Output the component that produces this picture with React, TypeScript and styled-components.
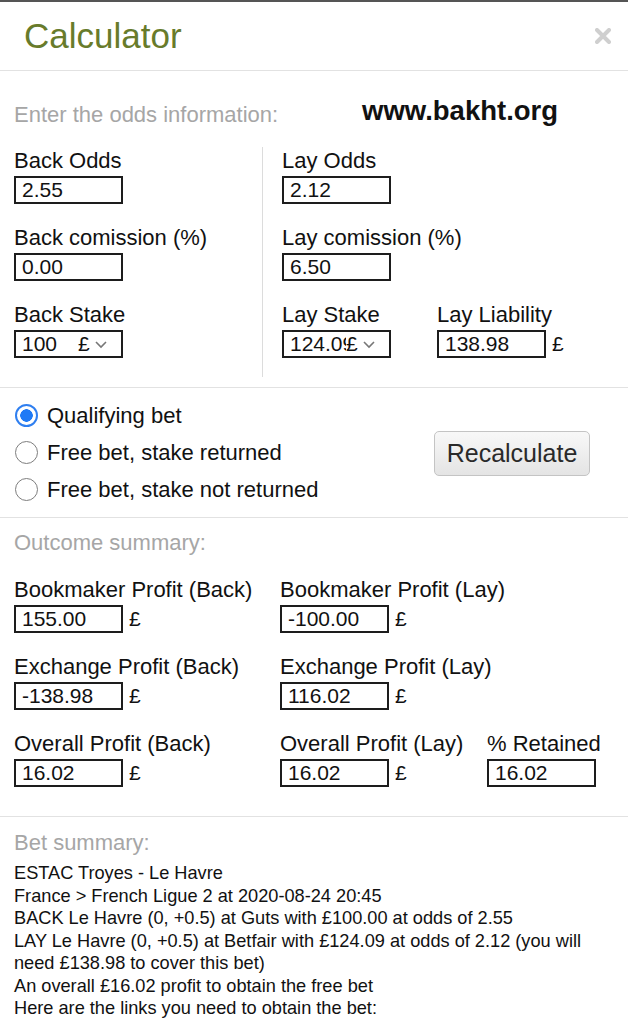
import styled, { createGlobalStyle } from 'styled-components';

const GlobalStyle = createGlobalStyle`
  html, body {
    margin: 0;
    padding: 0;
    background: #ffffff;
  }
  body {
    font-family: "Liberation Sans", Arial, sans-serif;
    color: #111;
  }
`;

export default function App() {
  return (
    <>
      <GlobalStyle />
      <Modal>
        <Header>
          <Title>Calculator</Title>
          <CloseButton aria-label="Close">
            <svg width="16" height="16" viewBox="0 0 16 16">
              <path d="M2 2 L14 14 M14 2 L2 14" stroke="#cfcfcf" strokeWidth="4" strokeLinecap="round" />
            </svg>
          </CloseButton>
        </Header>

        <OddsSection>
          <IntroRow>
            <Heading>Enter the odds information:</Heading>
            <SiteName>www.bakht.org</SiteName>
          </IntroRow>
          <Columns>
            <LeftColumn>
              <Field label="Back Odds" value="2.55" />
              <Field label="Back comission (%)" value="0.00" />
              <FieldGroup>
                <Label>Back Stake</Label>
                <SelectBox>
                  <SelectValue $width={56}>100</SelectValue>
                  <span>£</span>
                  <Chevron />
                </SelectBox>
              </FieldGroup>
            </LeftColumn>
            <RightColumn>
              <Field label="Lay Odds" value="2.12" />
              <Field label="Lay comission (%)" value="6.50" />
              <FieldRow>
                <FieldGroup>
                  <Label>Lay Stake</Label>
                  <SelectBox>
                    <SelectValue $width={56}>124.09</SelectValue>
                    <span>£</span>
                    <Chevron />
                  </SelectBox>
                </FieldGroup>
                <Field label="Lay Liability" value="138.98" currency />
              </FieldRow>
            </RightColumn>
          </Columns>
        </OddsSection>

        <BetTypeSection>
          <RadioList>
            <RadioRow>
              <Radio $checked />
              Qualifying bet
            </RadioRow>
            <RadioRow>
              <Radio />
              Free bet, stake returned
            </RadioRow>
            <RadioRow>
              <Radio />
              Free bet, stake not returned
            </RadioRow>
          </RadioList>
          <RecalcButton>Recalculate</RecalcButton>
        </BetTypeSection>

        <OutcomeSection>
          <Heading>Outcome summary:</Heading>
          <OutcomeGrid>
            <Field label="Bookmaker Profit (Back)" value="155.00" currency />
            <Field label="Bookmaker Profit (Lay)" value="-100.00" currency />
            <span />
            <Field label="Exchange Profit (Back)" value="-138.98" currency />
            <Field label="Exchange Profit (Lay)" value="116.02" currency />
            <span />
            <Field label="Overall Profit (Back)" value="16.02" currency />
            <Field label="Overall Profit (Lay)" value="16.02" currency />
            <Field label="% Retained" value="16.02" />
          </OutcomeGrid>
        </OutcomeSection>

        <SummarySection>
          <Heading>Bet summary:</Heading>
          <SummaryText>
            ESTAC Troyes - Le Havre
            <br />
            France &gt; French Ligue 2 at 2020-08-24 20:45
            <br />
            BACK Le Havre (0, +0.5) at Guts with £100.00 at odds of 2.55
            <br />
            LAY Le Havre (0, +0.5) at Betfair with £124.09 at odds of 2.12 (you will need £138.98 to cover this bet)
            <br />
            An overall £16.02 profit to obtain the free bet
            <br />
            Here are the links you need to obtain the bet:
          </SummaryText>
        </SummarySection>
      </Modal>
    </>
  );
}

function Field({ label, value, currency }: { label: string; value: string; currency?: boolean }) {
  return (
    <FieldGroup>
      <Label>{label}</Label>
      <InputLine>
        <InputBox>{value}</InputBox>
        {currency && <Currency>£</Currency>}
      </InputLine>
    </FieldGroup>
  );
}

function Chevron() {
  return (
    <ChevronIcon width="14" height="10" viewBox="0 0 14 10">
      <path d="M2 3 L7 8 L12 3" fill="none" stroke="#777" strokeWidth="1.6" />
    </ChevronIcon>
  );
}

const Modal = styled.div`
  width: 628px;
  min-height: 1024px;
  border-top: 2px solid #555;
  box-sizing: border-box;
  background: #fff;
  overflow: hidden;
`;

const Header = styled.div`
  height: 68px;
  display: flex;
  align-items: center;
  justify-content: space-between;
  padding: 0 17px 0 24px;
  border-bottom: 1px solid #e2e2e2;
`;

const Title = styled.h1`
  margin: 0;
  font-size: 35px;
  font-weight: normal;
  color: #687b2b;
  line-height: 68px;
`;

const CloseButton = styled.div`
  display: flex;
  align-items: center;
  margin-top: -1px;
`;

const Section = styled.div`
  padding: 0 14px;
  border-bottom: 1px solid #e2e2e2;
`;

const OddsSection = styled(Section)`
  padding-top: 25px;
  padding-bottom: 10px;
`;

const IntroRow = styled.div`
  display: grid;
  grid-template-columns: 348px auto;
  align-items: end;
  height: 31px;
`;

const Heading = styled.div`
  font-size: 22px;
  line-height: 24px;
  color: #a6a6a6;
`;

const SiteName = styled.div`
  font-size: 27.5px;
  font-weight: bold;
  color: #111;
  line-height: 29px;
  align-self: start;
`;

const Columns = styled.div`
  display: flex;
  margin-top: 20px;
`;

const LeftColumn = styled.div`
  width: 248px;
  display: flex;
  flex-direction: column;
  gap: 22px;
  padding-top: 2px;
`;

const RightColumn = styled.div`
  flex: 1;
  display: flex;
  flex-direction: column;
  gap: 22px;
  padding: 2px 0 19px 19px;
  border-left: 1px solid #dcdcdc;
`;

const FieldRow = styled.div`
  display: flex;
  gap: 46px;
`;

const FieldGroup = styled.div`
  display: flex;
  flex-direction: column;
  gap: 3px;
`;

const Label = styled.div`
  font-size: 22px;
  line-height: 24px;
  color: #111;
  white-space: nowrap;
`;

const InputLine = styled.div`
  display: flex;
  align-items: center;
  gap: 6px;
`;

const InputBox = styled.div`
  width: 109px;
  height: 28px;
  box-sizing: border-box;
  border: 2px solid #1d1d1d;
  padding: 0 6px;
  font-size: 21px;
  line-height: 24px;
  color: #111;
  background: #fff;
`;

const Currency = styled.span`
  font-size: 21px;
  color: #111;
`;

const SelectBox = styled.div`
  width: 109px;
  height: 28px;
  box-sizing: border-box;
  border: 2px solid #1d1d1d;
  padding: 0 4px 0 6px;
  display: flex;
  align-items: center;
  font-size: 21px;
  line-height: 24px;
  color: #111;
  overflow: hidden;
  white-space: nowrap;
`;

const SelectValue = styled.span<{ $width: number }>`
  width: ${(p) => p.$width}px;
  overflow: hidden;
  flex-shrink: 0;
`;

const ChevronIcon = styled.svg`
  margin-left: 4px;
  flex-shrink: 0;
`;

const BetTypeSection = styled(Section)`
  display: flex;
  align-items: center;
  justify-content: space-between;
  padding: 9px 38px 9px 14px;
`;

const RadioList = styled.div`
  display: flex;
  flex-direction: column;
`;

const RadioRow = styled.label`
  display: flex;
  align-items: center;
  gap: 9px;
  height: 37px;
  font-size: 22px;
  color: #111;
  white-space: nowrap;
`;

const Radio = styled.span<{ $checked?: boolean }>`
  width: 23px;
  height: 23px;
  box-sizing: border-box;
  border-radius: 50%;
  margin-left: 1px;
  flex-shrink: 0;
  border: ${(p) => (p.$checked ? '2px solid #2f7ff0' : '1.5px solid #7e7e7e')};
  background: ${(p) =>
    p.$checked ? 'radial-gradient(circle, #1f7af6 0 6px, #fff 6.5px)' : '#fff'};
`;

const RecalcButton = styled.button`
  width: 156px;
  height: 45px;
  border: 1px solid #c4c4c4;
  border-radius: 5px;
  background: linear-gradient(#f8f8f8, #e4e4e4);
  font-family: "Liberation Sans", Arial, sans-serif;
  font-size: 25px;
  color: #2a2a2a;
  padding: 0;
  margin-top: 1px;
`;

const OutcomeSection = styled(Section)`
  padding-top: 13px;
  padding-bottom: 29px;
`;

const OutcomeGrid = styled.div`
  display: grid;
  grid-template-columns: 266px 207px auto;
  row-gap: 22px;
  margin-top: 23px;
`;

const SummarySection = styled.div`
  padding: 14px 14px 0;
`;

const SummaryText = styled.div`
  margin-top: 7px;
  font-size: 18.2px;
  line-height: 22.5px;
  color: #111;
`;
